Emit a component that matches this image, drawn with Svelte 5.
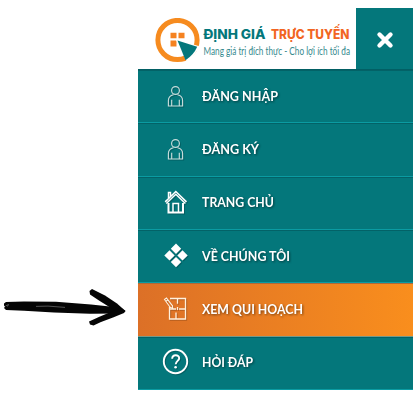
<script>
  const items = [
    { label: 'ĐĂNG NHẬP', icon: 'user', width: 76 },
    { label: 'ĐĂNG KÝ', icon: 'user', width: 57 },
    { label: 'TRANG CHỦ', icon: 'home', width: 72 },
    { label: 'VỀ CHÚNG TÔI', icon: 'diamonds', width: 88 },
    { label: 'XEM QUI HOẠCH', icon: 'plan', width: 101, active: true },
    { label: 'HỎI ĐÁP', icon: 'help', width: 51 }
  ];
</script>

<main>
  <div class="panel">
    <header>
      <div class="brand">
        <svg class="mark" width="46" height="46" viewBox="0 0 46 46">
          <circle cx="23.5" cy="22" r="19.6" fill="none" stroke="#f68b1f" stroke-width="5" />
          <path d="M16.5 14.800h6v5.500h-6zM24.500 14.800h6v5.500h-6zM16.500 22.500h6v6h-6z" fill="#f58220" />
          <path d="M21.500 21 46 28.500 34 46z" fill="#fff" />
          <path d="M23.500 22.500 43.200 28.700Q40 36.500 31.500 42.200z" fill="#04777b" />
        </svg>
        <svg class="wordmark" width="152" height="42" viewBox="0 0 152 42">
          <text class="name" x="0.5" y="21" textLength="62" lengthAdjust="spacingAndGlyphs" fill="#04777b">ĐỊNH GIÁ</text>
          <text class="name" x="68" y="21" textLength="78.500" lengthAdjust="spacingAndGlyphs" fill="#f26522">TRỰC TUYẾN</text>
          <text class="tag" x="0.500" y="36.500" textLength="146.500" lengthAdjust="spacingAndGlyphs">Mang giá trị đích thực - Cho lợi ích tối đa</text>
        </svg>
      </div>
      <button aria-label="Đóng">
        <svg width="18" height="18" viewBox="0 0 18 18"><path d="m3.500 3.500 11 11M14.500 3.500l-11 11" stroke="#fff" stroke-width="4.400" stroke-linecap="round" /></svg>
      </button>
    </header>
    <nav>
      {#each items as item}
        <div class="row" class:active={item.active}>
          <svg class="icon" width="28" height="28" viewBox="0 0 28 28" fill="none" stroke="#fff">
            {#if item.icon === 'user'}
              <g stroke="#c7dddc" stroke-width="1.15">
                <circle cx="13.500" cy="8.500" r="3.900" />
                <path d="M11.500 12.800c-3.300.7-5.100 2.500-5.100 5.800v5.400h14.200v-5.400c0-3.300-1.800-5.100-5.100-5.800M9.700 17.700v6.300M17.300 17.700v6.300" />
              </g>
            {:else if item.icon === 'home'}
              <path d="M6.500 15v9.500h14.500V15" stroke-width="2" />
              <path d="M6.500 10V4.500h2v3.700M3.200 13.900 13.800 3.500l10.700 10.400" stroke-width="1.500" />
              <path d="m4.300 15.500 9.500-9.300 9.600 9.300" stroke-width="1.500" />
              <path d="M11 24V15.500h5.500V24" stroke-width="1.500" />
            {:else if item.icon === 'diamonds'}
              <path d="m14 1.500 5.200 5.200-5.200 5.200-5.200-5.200zM7.500 8.200l5.200 5.200-5.200 5.200-5.200-5.200zM20.500 8.200l5.200 5.200-5.200 5.200-5.200-5.200zM14 14.900l5.200 5.200-5.200 5.200-5.200-5.200z" fill="#fff" stroke="none" />
            {:else if item.icon === 'plan'}
              <g stroke="#fff0dd" stroke-width="1.300">
                <path d="M8 3.500h15.500v20.500h-16V12M7.500 14H14M17 14h6.500M15.500 3.500v5.200M15.500 12v3M14 17.500V24" />
                <path d="m2.500 4.500 2-1.400 6 7.700.3 2.800-2.600-1.300zM4 6.300l2-1.500M7.800 7.500l1.300 1.700" stroke-width="1.100" />
              </g>
            {:else}
              <circle cx="13.500" cy="13.500" r="11.700" stroke-width="1.900" />
              <path d="M10.200 10.700c0-4.700 7-4.500 7-.5 0 2.500-3.500 2.900-3.500 6.100" stroke-width="1.900" />
              <circle cx="13.600" cy="19.300" r="1.300" fill="#fff" stroke="none" />
            {/if}
          </svg>
          <svg class="label" width={item.width + 4} height="24">
            <text x="0" y="16.500" textLength={item.width} lengthAdjust="spacingAndGlyphs">{item.label}</text>
          </svg>
        </div>
      {/each}
    </nav>
  </div>
  <svg class="arrow" width="126" height="40" viewBox="0 0 126 40" fill="#050505">
    <path d="m3 14.500 2-1.500 18-.5 32 .3 35 2.700 21 2.300 13 3.700-5 3-30 .3-36-1.400-30-1.700-18-.7-2-2 1-1.500-1-1z" />
    <path d="m88.500 2 2.500-2 13 6.500 12 8 8.500 7.500-3.500 2-11-5-12-7.500-9-6z" />
    <path d="m88 32.500 11-5 12-5 9-3.500 4.500 3-1.500 2-11 4.500-12 4.500-7.500 3.500-3.500-1z" />
    <path d="m4.500 17 3-1.500-1 2M35 17.400l12-.3 17 1.300" fill="none" stroke="#888" stroke-width=".6" />
  </svg>
</main>

<style>
  :global(body) { background: #fff; }
  main { display: grid; grid-template-columns: 138px 275px; width: 415px; height: 400px; box-sizing: border-box; padding-top: 8px; font-family: Lato, 'Open Sans', sans-serif; }
  .panel { grid-column: 2; grid-row: 1; width: 275px; }
  header { display: flex; height: 61px; justify-content: space-between; }
  .brand { display: flex; padding: 10px 0 0 16px; }
  .mark { flex: none; }
  .wordmark { margin-left: 3px; flex: none; overflow: visible; }
  .name { font: 800 12.800px Inter, Lato, sans-serif; }
  .tag { font: 11.500px Lato, sans-serif; fill: #35898d; }
  button { width: 57px; height: 61px; flex: none; border: 0; padding: 3px 0 0; background: #04777b; display: flex; align-items: center; justify-content: center; }
  nav { height: 321px; display: flex; flex-direction: column; background: #04777b; border-top: 1px solid #025f64; box-sizing: border-box; }
  .row { flex: 1; min-height: 0; box-sizing: border-box; display: flex; align-items: center; padding: 0 0 2px 24px; background: #04777b; border-top: 1px solid #036267; border-bottom: 1px solid #0b9ba2; }
  .active { background: linear-gradient(90deg, #dc7027, #f98e1d); border-top-color: #ae6736; border-bottom-color: #759a88; }
  .icon { flex: none; filter: drop-shadow(1px 1px 0 #0003); }
  .label { margin-left: 12px; overflow: visible; filter: drop-shadow(1px 1px 1px #0007); }
  .label text { font: 700 12.300px Lato, 'Open Sans', sans-serif; fill: #fff; }
  .arrow { grid-column: 1; grid-row: 1; margin: 281px 0 0 1px; }
</style>
